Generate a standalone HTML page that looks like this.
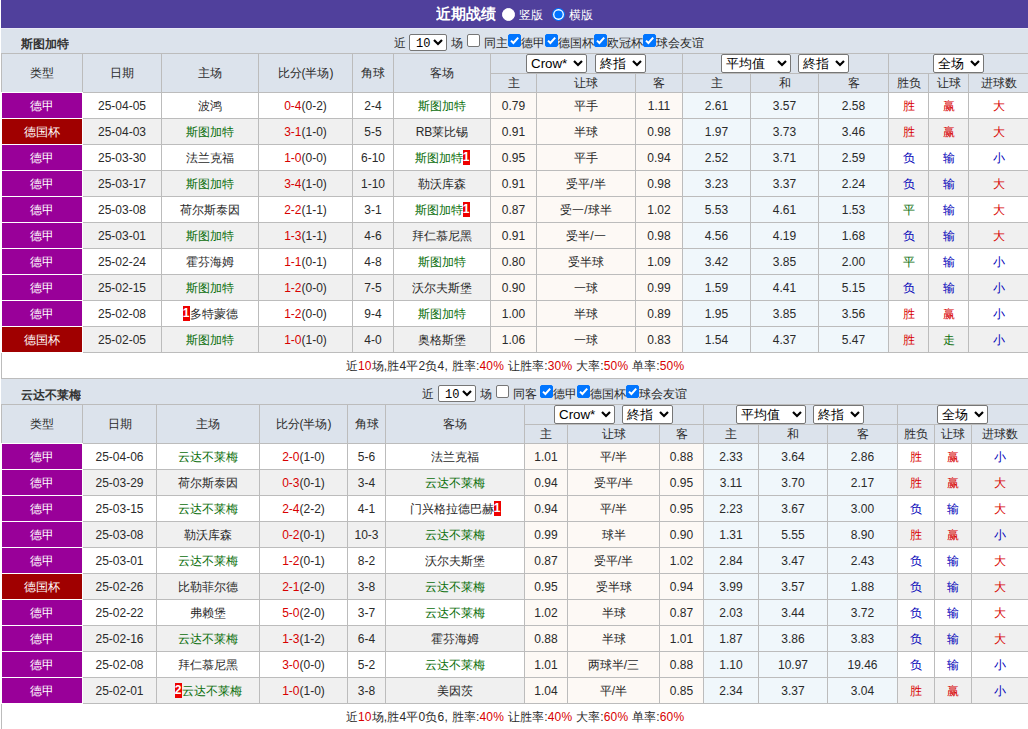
<!DOCTYPE html><html><head><meta charset="utf-8"><style>
html,body{margin:0;padding:0;background:#fff;}
body{width:1028px;height:729px;overflow:hidden;position:relative;font-family:"Liberation Sans",sans-serif;font-size:12px;color:#2a2a2a;}
body>div{position:absolute;white-space:nowrap;overflow:hidden;}
.ttl{font-weight:bold;color:#333;}
.tx{line-height:14px;}
.dg{padding-top:1px;box-sizing:border-box;}
.bd{display:inline-block;background:#e00;color:#fff;font-weight:bold;line-height:15px;height:15px;width:7px;text-align:center;vertical-align:1px;}
.sel{height:16px;border:1px solid #767676;border-radius:2px;background:#fff;box-sizing:border-box;color:#000;}
.sel span{position:absolute;left:4px;top:0;font-size:13.33px;}
.sel .chev{position:absolute;right:3px;}
.cb{width:13px;height:13px;box-sizing:border-box;border:1px solid #767676;border-radius:2px;background:#fff;}
.cb.on{background:#0075ff;border-color:#0075ff;}
.cb svg{position:absolute;left:-1px;top:-1px;}
.rd{width:13px;height:13px;box-sizing:border-box;border:1px solid #767676;border-radius:50%;background:#fff;}
.rd.on{border:2px solid #0075ff;}
.rd.on b{position:absolute;left:2px;top:2px;width:5px;height:5px;border-radius:50%;background:#0075ff;}
</style></head><body>
<div style="left:1px;top:0;width:1100px;height:28px;background:#50409c"></div>
<div style="left:1px;top:28px;width:1100px;height:1px;background:#e9e9f6"></div>
<div class="tx" style="left:436px;top:4px;font-size:15px;font-weight:bold;color:#fff;line-height:20px">近期战绩</div>
<div class="rd" style="left:502px;top:8px;background:#fff;border-color:#fff"></div>
<div class="tx" style="left:519px;top:7px;color:#fff;line-height:16px">竖版</div>
<div style="left:552px;top:8px;width:13px;height:13px"><svg width="13" height="13" viewBox="0 0 13 13"><circle cx="6.5" cy="6.5" r="6.5" fill="#0075ff"/><circle cx="6.5" cy="6.5" r="5.4" fill="#fff"/><circle cx="6.5" cy="6.5" r="4.1" fill="#0075ff"/></svg></div>
<div class="tx" style="left:569px;top:7px;color:#fff;line-height:16px">横版</div>
<div style="left:1px;top:29px;width:1100px;height:24px;background:#dce3ec"></div>
<div class="ttl" style="left:21px;top:37px;height:14px;line-height:14px">斯图加特</div>
<div style="left:1px;top:53px;width:1100px;height:39px;background:#dce3ec"></div>
<div style="left:2px;top:54px;width:80px;height:38px;line-height:38px;text-align:center;">类型</div>
<div style="left:83px;top:54px;width:78px;height:38px;line-height:38px;text-align:center;">日期</div>
<div style="left:162px;top:54px;width:96px;height:38px;line-height:38px;text-align:center;">主场</div>
<div style="left:259px;top:54px;width:93px;height:38px;line-height:38px;text-align:center;">比分(半场)</div>
<div style="left:353px;top:54px;width:40px;height:38px;line-height:38px;text-align:center;">角球</div>
<div style="left:394px;top:54px;width:96px;height:38px;line-height:38px;text-align:center;">客场</div>
<div style="left:491px;top:74px;width:45px;height:18px;line-height:18px;text-align:center;">主</div>
<div style="left:537px;top:74px;width:98px;height:18px;line-height:18px;text-align:center;">让球</div>
<div style="left:636px;top:74px;width:46px;height:18px;line-height:18px;text-align:center;">客</div>
<div style="left:683px;top:74px;width:67px;height:18px;line-height:18px;text-align:center;">主</div>
<div style="left:751px;top:74px;width:67px;height:18px;line-height:18px;text-align:center;">和</div>
<div style="left:819px;top:74px;width:69px;height:18px;line-height:18px;text-align:center;">客</div>
<div style="left:889px;top:74px;width:39px;height:18px;line-height:18px;text-align:center;">胜负</div>
<div style="left:929px;top:74px;width:39px;height:18px;line-height:18px;text-align:center;">让球</div>
<div style="left:969px;top:74px;width:59px;height:18px;line-height:18px;text-align:center;">进球数</div>
<div style="left:2px;top:93px;width:80px;height:25px;line-height:25px;text-align:center;padding-top:1px;box-sizing:border-box;background:#990099;color:#fff;">德甲</div>
<div style="left:83px;top:93px;width:78px;height:25px;line-height:25px;text-align:center;padding-top:1px;box-sizing:border-box;background:#ffffff;">25-04-05</div>
<div style="left:162px;top:93px;width:96px;height:25px;line-height:25px;text-align:center;padding-top:1px;box-sizing:border-box;background:#ffffff;">波鸿</div>
<div style="left:259px;top:93px;width:93px;height:25px;line-height:25px;text-align:center;padding-top:1px;box-sizing:border-box;background:#ffffff;"><span style="color:#d80000">0-4</span>(0-2)</div>
<div style="left:353px;top:93px;width:40px;height:25px;line-height:25px;text-align:center;padding-top:1px;box-sizing:border-box;background:#ffffff;">2-4</div>
<div style="left:394px;top:93px;width:96px;height:25px;line-height:25px;text-align:center;padding-top:1px;box-sizing:border-box;background:#ffffff;"><span style="color:#0a6e0a">斯图加特</span></div>
<div style="left:491px;top:93px;width:45px;height:25px;line-height:25px;text-align:center;padding-top:1px;box-sizing:border-box;background:#fdf9f5;">0.79</div>
<div style="left:537px;top:93px;width:98px;height:25px;line-height:25px;text-align:center;padding-top:1px;box-sizing:border-box;background:#fdf9f5;">平手</div>
<div style="left:636px;top:93px;width:46px;height:25px;line-height:25px;text-align:center;padding-top:1px;box-sizing:border-box;background:#fdf9f5;">1.11</div>
<div style="left:683px;top:93px;width:67px;height:25px;line-height:25px;text-align:center;padding-top:1px;box-sizing:border-box;background:#f0f7fb;">2.61</div>
<div style="left:751px;top:93px;width:67px;height:25px;line-height:25px;text-align:center;padding-top:1px;box-sizing:border-box;background:#f0f7fb;">3.57</div>
<div style="left:819px;top:93px;width:69px;height:25px;line-height:25px;text-align:center;padding-top:1px;box-sizing:border-box;background:#f0f7fb;">2.58</div>
<div style="left:889px;top:93px;width:39px;height:25px;line-height:25px;text-align:center;padding-top:1px;box-sizing:border-box;background:#ffffff;color:#d80000;">胜</div>
<div style="left:929px;top:93px;width:39px;height:25px;line-height:25px;text-align:center;padding-top:1px;box-sizing:border-box;background:#ffffff;color:#d80000;">赢</div>
<div style="left:969px;top:93px;width:59px;height:25px;line-height:25px;text-align:center;padding-top:1px;box-sizing:border-box;background:#ffffff;color:#d80000;">大</div>
<div style="left:2px;top:119px;width:80px;height:25px;line-height:25px;text-align:center;padding-top:1px;box-sizing:border-box;background:#a00000;color:#fff;">德国杯</div>
<div style="left:83px;top:119px;width:78px;height:25px;line-height:25px;text-align:center;padding-top:1px;box-sizing:border-box;background:#f0f0f0;">25-04-03</div>
<div style="left:162px;top:119px;width:96px;height:25px;line-height:25px;text-align:center;padding-top:1px;box-sizing:border-box;background:#f0f0f0;"><span style="color:#0a6e0a">斯图加特</span></div>
<div style="left:259px;top:119px;width:93px;height:25px;line-height:25px;text-align:center;padding-top:1px;box-sizing:border-box;background:#f0f0f0;"><span style="color:#d80000">3-1</span>(1-0)</div>
<div style="left:353px;top:119px;width:40px;height:25px;line-height:25px;text-align:center;padding-top:1px;box-sizing:border-box;background:#f0f0f0;">5-5</div>
<div style="left:394px;top:119px;width:96px;height:25px;line-height:25px;text-align:center;padding-top:1px;box-sizing:border-box;background:#f0f0f0;">RB莱比锡</div>
<div style="left:491px;top:119px;width:45px;height:25px;line-height:25px;text-align:center;padding-top:1px;box-sizing:border-box;background:#fdf9f5;">0.91</div>
<div style="left:537px;top:119px;width:98px;height:25px;line-height:25px;text-align:center;padding-top:1px;box-sizing:border-box;background:#fdf9f5;">半球</div>
<div style="left:636px;top:119px;width:46px;height:25px;line-height:25px;text-align:center;padding-top:1px;box-sizing:border-box;background:#fdf9f5;">0.98</div>
<div style="left:683px;top:119px;width:67px;height:25px;line-height:25px;text-align:center;padding-top:1px;box-sizing:border-box;background:#f0f7fb;">1.97</div>
<div style="left:751px;top:119px;width:67px;height:25px;line-height:25px;text-align:center;padding-top:1px;box-sizing:border-box;background:#f0f7fb;">3.73</div>
<div style="left:819px;top:119px;width:69px;height:25px;line-height:25px;text-align:center;padding-top:1px;box-sizing:border-box;background:#f0f7fb;">3.46</div>
<div style="left:889px;top:119px;width:39px;height:25px;line-height:25px;text-align:center;padding-top:1px;box-sizing:border-box;background:#f0f0f0;color:#d80000;">胜</div>
<div style="left:929px;top:119px;width:39px;height:25px;line-height:25px;text-align:center;padding-top:1px;box-sizing:border-box;background:#f0f0f0;color:#d80000;">赢</div>
<div style="left:969px;top:119px;width:59px;height:25px;line-height:25px;text-align:center;padding-top:1px;box-sizing:border-box;background:#f0f0f0;color:#d80000;">大</div>
<div style="left:2px;top:145px;width:80px;height:25px;line-height:25px;text-align:center;padding-top:1px;box-sizing:border-box;background:#990099;color:#fff;">德甲</div>
<div style="left:83px;top:145px;width:78px;height:25px;line-height:25px;text-align:center;padding-top:1px;box-sizing:border-box;background:#ffffff;">25-03-30</div>
<div style="left:162px;top:145px;width:96px;height:25px;line-height:25px;text-align:center;padding-top:1px;box-sizing:border-box;background:#ffffff;">法兰克福</div>
<div style="left:259px;top:145px;width:93px;height:25px;line-height:25px;text-align:center;padding-top:1px;box-sizing:border-box;background:#ffffff;"><span style="color:#d80000">1-0</span>(0-0)</div>
<div style="left:353px;top:145px;width:40px;height:25px;line-height:25px;text-align:center;padding-top:1px;box-sizing:border-box;background:#ffffff;">6-10</div>
<div style="left:394px;top:145px;width:96px;height:25px;line-height:25px;text-align:center;padding-top:1px;box-sizing:border-box;background:#ffffff;"><span style="color:#0a6e0a">斯图加特</span><span class="bd">1</span></div>
<div style="left:491px;top:145px;width:45px;height:25px;line-height:25px;text-align:center;padding-top:1px;box-sizing:border-box;background:#fdf9f5;">0.95</div>
<div style="left:537px;top:145px;width:98px;height:25px;line-height:25px;text-align:center;padding-top:1px;box-sizing:border-box;background:#fdf9f5;">平手</div>
<div style="left:636px;top:145px;width:46px;height:25px;line-height:25px;text-align:center;padding-top:1px;box-sizing:border-box;background:#fdf9f5;">0.94</div>
<div style="left:683px;top:145px;width:67px;height:25px;line-height:25px;text-align:center;padding-top:1px;box-sizing:border-box;background:#f0f7fb;">2.52</div>
<div style="left:751px;top:145px;width:67px;height:25px;line-height:25px;text-align:center;padding-top:1px;box-sizing:border-box;background:#f0f7fb;">3.71</div>
<div style="left:819px;top:145px;width:69px;height:25px;line-height:25px;text-align:center;padding-top:1px;box-sizing:border-box;background:#f0f7fb;">2.59</div>
<div style="left:889px;top:145px;width:39px;height:25px;line-height:25px;text-align:center;padding-top:1px;box-sizing:border-box;background:#ffffff;color:#0000b8;">负</div>
<div style="left:929px;top:145px;width:39px;height:25px;line-height:25px;text-align:center;padding-top:1px;box-sizing:border-box;background:#ffffff;color:#0000b8;">输</div>
<div style="left:969px;top:145px;width:59px;height:25px;line-height:25px;text-align:center;padding-top:1px;box-sizing:border-box;background:#ffffff;color:#0000b8;">小</div>
<div style="left:2px;top:171px;width:80px;height:25px;line-height:25px;text-align:center;padding-top:1px;box-sizing:border-box;background:#990099;color:#fff;">德甲</div>
<div style="left:83px;top:171px;width:78px;height:25px;line-height:25px;text-align:center;padding-top:1px;box-sizing:border-box;background:#f0f0f0;">25-03-17</div>
<div style="left:162px;top:171px;width:96px;height:25px;line-height:25px;text-align:center;padding-top:1px;box-sizing:border-box;background:#f0f0f0;"><span style="color:#0a6e0a">斯图加特</span></div>
<div style="left:259px;top:171px;width:93px;height:25px;line-height:25px;text-align:center;padding-top:1px;box-sizing:border-box;background:#f0f0f0;"><span style="color:#d80000">3-4</span>(1-0)</div>
<div style="left:353px;top:171px;width:40px;height:25px;line-height:25px;text-align:center;padding-top:1px;box-sizing:border-box;background:#f0f0f0;">1-10</div>
<div style="left:394px;top:171px;width:96px;height:25px;line-height:25px;text-align:center;padding-top:1px;box-sizing:border-box;background:#f0f0f0;">勒沃库森</div>
<div style="left:491px;top:171px;width:45px;height:25px;line-height:25px;text-align:center;padding-top:1px;box-sizing:border-box;background:#fdf9f5;">0.91</div>
<div style="left:537px;top:171px;width:98px;height:25px;line-height:25px;text-align:center;padding-top:1px;box-sizing:border-box;background:#fdf9f5;">受平/半</div>
<div style="left:636px;top:171px;width:46px;height:25px;line-height:25px;text-align:center;padding-top:1px;box-sizing:border-box;background:#fdf9f5;">0.98</div>
<div style="left:683px;top:171px;width:67px;height:25px;line-height:25px;text-align:center;padding-top:1px;box-sizing:border-box;background:#f0f7fb;">3.23</div>
<div style="left:751px;top:171px;width:67px;height:25px;line-height:25px;text-align:center;padding-top:1px;box-sizing:border-box;background:#f0f7fb;">3.37</div>
<div style="left:819px;top:171px;width:69px;height:25px;line-height:25px;text-align:center;padding-top:1px;box-sizing:border-box;background:#f0f7fb;">2.24</div>
<div style="left:889px;top:171px;width:39px;height:25px;line-height:25px;text-align:center;padding-top:1px;box-sizing:border-box;background:#f0f0f0;color:#0000b8;">负</div>
<div style="left:929px;top:171px;width:39px;height:25px;line-height:25px;text-align:center;padding-top:1px;box-sizing:border-box;background:#f0f0f0;color:#0000b8;">输</div>
<div style="left:969px;top:171px;width:59px;height:25px;line-height:25px;text-align:center;padding-top:1px;box-sizing:border-box;background:#f0f0f0;color:#d80000;">大</div>
<div style="left:2px;top:197px;width:80px;height:25px;line-height:25px;text-align:center;padding-top:1px;box-sizing:border-box;background:#990099;color:#fff;">德甲</div>
<div style="left:83px;top:197px;width:78px;height:25px;line-height:25px;text-align:center;padding-top:1px;box-sizing:border-box;background:#ffffff;">25-03-08</div>
<div style="left:162px;top:197px;width:96px;height:25px;line-height:25px;text-align:center;padding-top:1px;box-sizing:border-box;background:#ffffff;">荷尔斯泰因</div>
<div style="left:259px;top:197px;width:93px;height:25px;line-height:25px;text-align:center;padding-top:1px;box-sizing:border-box;background:#ffffff;"><span style="color:#d80000">2-2</span>(1-1)</div>
<div style="left:353px;top:197px;width:40px;height:25px;line-height:25px;text-align:center;padding-top:1px;box-sizing:border-box;background:#ffffff;">3-1</div>
<div style="left:394px;top:197px;width:96px;height:25px;line-height:25px;text-align:center;padding-top:1px;box-sizing:border-box;background:#ffffff;"><span style="color:#0a6e0a">斯图加特</span><span class="bd">1</span></div>
<div style="left:491px;top:197px;width:45px;height:25px;line-height:25px;text-align:center;padding-top:1px;box-sizing:border-box;background:#fdf9f5;">0.87</div>
<div style="left:537px;top:197px;width:98px;height:25px;line-height:25px;text-align:center;padding-top:1px;box-sizing:border-box;background:#fdf9f5;">受一/球半</div>
<div style="left:636px;top:197px;width:46px;height:25px;line-height:25px;text-align:center;padding-top:1px;box-sizing:border-box;background:#fdf9f5;">1.02</div>
<div style="left:683px;top:197px;width:67px;height:25px;line-height:25px;text-align:center;padding-top:1px;box-sizing:border-box;background:#f0f7fb;">5.53</div>
<div style="left:751px;top:197px;width:67px;height:25px;line-height:25px;text-align:center;padding-top:1px;box-sizing:border-box;background:#f0f7fb;">4.61</div>
<div style="left:819px;top:197px;width:69px;height:25px;line-height:25px;text-align:center;padding-top:1px;box-sizing:border-box;background:#f0f7fb;">1.53</div>
<div style="left:889px;top:197px;width:39px;height:25px;line-height:25px;text-align:center;padding-top:1px;box-sizing:border-box;background:#ffffff;color:#0a6e0a;">平</div>
<div style="left:929px;top:197px;width:39px;height:25px;line-height:25px;text-align:center;padding-top:1px;box-sizing:border-box;background:#ffffff;color:#0000b8;">输</div>
<div style="left:969px;top:197px;width:59px;height:25px;line-height:25px;text-align:center;padding-top:1px;box-sizing:border-box;background:#ffffff;color:#d80000;">大</div>
<div style="left:2px;top:223px;width:80px;height:25px;line-height:25px;text-align:center;padding-top:1px;box-sizing:border-box;background:#990099;color:#fff;">德甲</div>
<div style="left:83px;top:223px;width:78px;height:25px;line-height:25px;text-align:center;padding-top:1px;box-sizing:border-box;background:#f0f0f0;">25-03-01</div>
<div style="left:162px;top:223px;width:96px;height:25px;line-height:25px;text-align:center;padding-top:1px;box-sizing:border-box;background:#f0f0f0;"><span style="color:#0a6e0a">斯图加特</span></div>
<div style="left:259px;top:223px;width:93px;height:25px;line-height:25px;text-align:center;padding-top:1px;box-sizing:border-box;background:#f0f0f0;"><span style="color:#d80000">1-3</span>(1-1)</div>
<div style="left:353px;top:223px;width:40px;height:25px;line-height:25px;text-align:center;padding-top:1px;box-sizing:border-box;background:#f0f0f0;">4-6</div>
<div style="left:394px;top:223px;width:96px;height:25px;line-height:25px;text-align:center;padding-top:1px;box-sizing:border-box;background:#f0f0f0;">拜仁慕尼黑</div>
<div style="left:491px;top:223px;width:45px;height:25px;line-height:25px;text-align:center;padding-top:1px;box-sizing:border-box;background:#fdf9f5;">0.91</div>
<div style="left:537px;top:223px;width:98px;height:25px;line-height:25px;text-align:center;padding-top:1px;box-sizing:border-box;background:#fdf9f5;">受半/一</div>
<div style="left:636px;top:223px;width:46px;height:25px;line-height:25px;text-align:center;padding-top:1px;box-sizing:border-box;background:#fdf9f5;">0.98</div>
<div style="left:683px;top:223px;width:67px;height:25px;line-height:25px;text-align:center;padding-top:1px;box-sizing:border-box;background:#f0f7fb;">4.56</div>
<div style="left:751px;top:223px;width:67px;height:25px;line-height:25px;text-align:center;padding-top:1px;box-sizing:border-box;background:#f0f7fb;">4.19</div>
<div style="left:819px;top:223px;width:69px;height:25px;line-height:25px;text-align:center;padding-top:1px;box-sizing:border-box;background:#f0f7fb;">1.68</div>
<div style="left:889px;top:223px;width:39px;height:25px;line-height:25px;text-align:center;padding-top:1px;box-sizing:border-box;background:#f0f0f0;color:#0000b8;">负</div>
<div style="left:929px;top:223px;width:39px;height:25px;line-height:25px;text-align:center;padding-top:1px;box-sizing:border-box;background:#f0f0f0;color:#0000b8;">输</div>
<div style="left:969px;top:223px;width:59px;height:25px;line-height:25px;text-align:center;padding-top:1px;box-sizing:border-box;background:#f0f0f0;color:#d80000;">大</div>
<div style="left:2px;top:249px;width:80px;height:25px;line-height:25px;text-align:center;padding-top:1px;box-sizing:border-box;background:#990099;color:#fff;">德甲</div>
<div style="left:83px;top:249px;width:78px;height:25px;line-height:25px;text-align:center;padding-top:1px;box-sizing:border-box;background:#ffffff;">25-02-24</div>
<div style="left:162px;top:249px;width:96px;height:25px;line-height:25px;text-align:center;padding-top:1px;box-sizing:border-box;background:#ffffff;">霍芬海姆</div>
<div style="left:259px;top:249px;width:93px;height:25px;line-height:25px;text-align:center;padding-top:1px;box-sizing:border-box;background:#ffffff;"><span style="color:#d80000">1-1</span>(0-1)</div>
<div style="left:353px;top:249px;width:40px;height:25px;line-height:25px;text-align:center;padding-top:1px;box-sizing:border-box;background:#ffffff;">4-8</div>
<div style="left:394px;top:249px;width:96px;height:25px;line-height:25px;text-align:center;padding-top:1px;box-sizing:border-box;background:#ffffff;"><span style="color:#0a6e0a">斯图加特</span></div>
<div style="left:491px;top:249px;width:45px;height:25px;line-height:25px;text-align:center;padding-top:1px;box-sizing:border-box;background:#fdf9f5;">0.80</div>
<div style="left:537px;top:249px;width:98px;height:25px;line-height:25px;text-align:center;padding-top:1px;box-sizing:border-box;background:#fdf9f5;">受半球</div>
<div style="left:636px;top:249px;width:46px;height:25px;line-height:25px;text-align:center;padding-top:1px;box-sizing:border-box;background:#fdf9f5;">1.09</div>
<div style="left:683px;top:249px;width:67px;height:25px;line-height:25px;text-align:center;padding-top:1px;box-sizing:border-box;background:#f0f7fb;">3.42</div>
<div style="left:751px;top:249px;width:67px;height:25px;line-height:25px;text-align:center;padding-top:1px;box-sizing:border-box;background:#f0f7fb;">3.85</div>
<div style="left:819px;top:249px;width:69px;height:25px;line-height:25px;text-align:center;padding-top:1px;box-sizing:border-box;background:#f0f7fb;">2.00</div>
<div style="left:889px;top:249px;width:39px;height:25px;line-height:25px;text-align:center;padding-top:1px;box-sizing:border-box;background:#ffffff;color:#0a6e0a;">平</div>
<div style="left:929px;top:249px;width:39px;height:25px;line-height:25px;text-align:center;padding-top:1px;box-sizing:border-box;background:#ffffff;color:#0000b8;">输</div>
<div style="left:969px;top:249px;width:59px;height:25px;line-height:25px;text-align:center;padding-top:1px;box-sizing:border-box;background:#ffffff;color:#0000b8;">小</div>
<div style="left:2px;top:275px;width:80px;height:25px;line-height:25px;text-align:center;padding-top:1px;box-sizing:border-box;background:#990099;color:#fff;">德甲</div>
<div style="left:83px;top:275px;width:78px;height:25px;line-height:25px;text-align:center;padding-top:1px;box-sizing:border-box;background:#f0f0f0;">25-02-15</div>
<div style="left:162px;top:275px;width:96px;height:25px;line-height:25px;text-align:center;padding-top:1px;box-sizing:border-box;background:#f0f0f0;"><span style="color:#0a6e0a">斯图加特</span></div>
<div style="left:259px;top:275px;width:93px;height:25px;line-height:25px;text-align:center;padding-top:1px;box-sizing:border-box;background:#f0f0f0;"><span style="color:#d80000">1-2</span>(0-0)</div>
<div style="left:353px;top:275px;width:40px;height:25px;line-height:25px;text-align:center;padding-top:1px;box-sizing:border-box;background:#f0f0f0;">7-5</div>
<div style="left:394px;top:275px;width:96px;height:25px;line-height:25px;text-align:center;padding-top:1px;box-sizing:border-box;background:#f0f0f0;">沃尔夫斯堡</div>
<div style="left:491px;top:275px;width:45px;height:25px;line-height:25px;text-align:center;padding-top:1px;box-sizing:border-box;background:#fdf9f5;">0.90</div>
<div style="left:537px;top:275px;width:98px;height:25px;line-height:25px;text-align:center;padding-top:1px;box-sizing:border-box;background:#fdf9f5;">一球</div>
<div style="left:636px;top:275px;width:46px;height:25px;line-height:25px;text-align:center;padding-top:1px;box-sizing:border-box;background:#fdf9f5;">0.99</div>
<div style="left:683px;top:275px;width:67px;height:25px;line-height:25px;text-align:center;padding-top:1px;box-sizing:border-box;background:#f0f7fb;">1.59</div>
<div style="left:751px;top:275px;width:67px;height:25px;line-height:25px;text-align:center;padding-top:1px;box-sizing:border-box;background:#f0f7fb;">4.41</div>
<div style="left:819px;top:275px;width:69px;height:25px;line-height:25px;text-align:center;padding-top:1px;box-sizing:border-box;background:#f0f7fb;">5.15</div>
<div style="left:889px;top:275px;width:39px;height:25px;line-height:25px;text-align:center;padding-top:1px;box-sizing:border-box;background:#f0f0f0;color:#0000b8;">负</div>
<div style="left:929px;top:275px;width:39px;height:25px;line-height:25px;text-align:center;padding-top:1px;box-sizing:border-box;background:#f0f0f0;color:#0000b8;">输</div>
<div style="left:969px;top:275px;width:59px;height:25px;line-height:25px;text-align:center;padding-top:1px;box-sizing:border-box;background:#f0f0f0;color:#0000b8;">小</div>
<div style="left:2px;top:301px;width:80px;height:25px;line-height:25px;text-align:center;padding-top:1px;box-sizing:border-box;background:#990099;color:#fff;">德甲</div>
<div style="left:83px;top:301px;width:78px;height:25px;line-height:25px;text-align:center;padding-top:1px;box-sizing:border-box;background:#ffffff;">25-02-08</div>
<div style="left:162px;top:301px;width:96px;height:25px;line-height:25px;text-align:center;padding-top:1px;box-sizing:border-box;background:#ffffff;"><span class="bd">1</span>多特蒙德</div>
<div style="left:259px;top:301px;width:93px;height:25px;line-height:25px;text-align:center;padding-top:1px;box-sizing:border-box;background:#ffffff;"><span style="color:#d80000">1-2</span>(0-0)</div>
<div style="left:353px;top:301px;width:40px;height:25px;line-height:25px;text-align:center;padding-top:1px;box-sizing:border-box;background:#ffffff;">9-4</div>
<div style="left:394px;top:301px;width:96px;height:25px;line-height:25px;text-align:center;padding-top:1px;box-sizing:border-box;background:#ffffff;"><span style="color:#0a6e0a">斯图加特</span></div>
<div style="left:491px;top:301px;width:45px;height:25px;line-height:25px;text-align:center;padding-top:1px;box-sizing:border-box;background:#fdf9f5;">1.00</div>
<div style="left:537px;top:301px;width:98px;height:25px;line-height:25px;text-align:center;padding-top:1px;box-sizing:border-box;background:#fdf9f5;">半球</div>
<div style="left:636px;top:301px;width:46px;height:25px;line-height:25px;text-align:center;padding-top:1px;box-sizing:border-box;background:#fdf9f5;">0.89</div>
<div style="left:683px;top:301px;width:67px;height:25px;line-height:25px;text-align:center;padding-top:1px;box-sizing:border-box;background:#f0f7fb;">1.95</div>
<div style="left:751px;top:301px;width:67px;height:25px;line-height:25px;text-align:center;padding-top:1px;box-sizing:border-box;background:#f0f7fb;">3.85</div>
<div style="left:819px;top:301px;width:69px;height:25px;line-height:25px;text-align:center;padding-top:1px;box-sizing:border-box;background:#f0f7fb;">3.56</div>
<div style="left:889px;top:301px;width:39px;height:25px;line-height:25px;text-align:center;padding-top:1px;box-sizing:border-box;background:#ffffff;color:#d80000;">胜</div>
<div style="left:929px;top:301px;width:39px;height:25px;line-height:25px;text-align:center;padding-top:1px;box-sizing:border-box;background:#ffffff;color:#d80000;">赢</div>
<div style="left:969px;top:301px;width:59px;height:25px;line-height:25px;text-align:center;padding-top:1px;box-sizing:border-box;background:#ffffff;color:#0000b8;">小</div>
<div style="left:2px;top:327px;width:80px;height:25px;line-height:25px;text-align:center;padding-top:1px;box-sizing:border-box;background:#a00000;color:#fff;">德国杯</div>
<div style="left:83px;top:327px;width:78px;height:25px;line-height:25px;text-align:center;padding-top:1px;box-sizing:border-box;background:#f0f0f0;">25-02-05</div>
<div style="left:162px;top:327px;width:96px;height:25px;line-height:25px;text-align:center;padding-top:1px;box-sizing:border-box;background:#f0f0f0;"><span style="color:#0a6e0a">斯图加特</span></div>
<div style="left:259px;top:327px;width:93px;height:25px;line-height:25px;text-align:center;padding-top:1px;box-sizing:border-box;background:#f0f0f0;"><span style="color:#d80000">1-0</span>(1-0)</div>
<div style="left:353px;top:327px;width:40px;height:25px;line-height:25px;text-align:center;padding-top:1px;box-sizing:border-box;background:#f0f0f0;">4-0</div>
<div style="left:394px;top:327px;width:96px;height:25px;line-height:25px;text-align:center;padding-top:1px;box-sizing:border-box;background:#f0f0f0;">奥格斯堡</div>
<div style="left:491px;top:327px;width:45px;height:25px;line-height:25px;text-align:center;padding-top:1px;box-sizing:border-box;background:#fdf9f5;">1.06</div>
<div style="left:537px;top:327px;width:98px;height:25px;line-height:25px;text-align:center;padding-top:1px;box-sizing:border-box;background:#fdf9f5;">一球</div>
<div style="left:636px;top:327px;width:46px;height:25px;line-height:25px;text-align:center;padding-top:1px;box-sizing:border-box;background:#fdf9f5;">0.83</div>
<div style="left:683px;top:327px;width:67px;height:25px;line-height:25px;text-align:center;padding-top:1px;box-sizing:border-box;background:#f0f7fb;">1.54</div>
<div style="left:751px;top:327px;width:67px;height:25px;line-height:25px;text-align:center;padding-top:1px;box-sizing:border-box;background:#f0f7fb;">4.37</div>
<div style="left:819px;top:327px;width:69px;height:25px;line-height:25px;text-align:center;padding-top:1px;box-sizing:border-box;background:#f0f7fb;">5.47</div>
<div style="left:889px;top:327px;width:39px;height:25px;line-height:25px;text-align:center;padding-top:1px;box-sizing:border-box;background:#f0f0f0;color:#d80000;">胜</div>
<div style="left:929px;top:327px;width:39px;height:25px;line-height:25px;text-align:center;padding-top:1px;box-sizing:border-box;background:#f0f0f0;color:#0a6e0a;">走</div>
<div style="left:969px;top:327px;width:59px;height:25px;line-height:25px;text-align:center;padding-top:1px;box-sizing:border-box;background:#f0f0f0;color:#0000b8;">小</div>
<div style="left:2px;top:353px;width:1026px;height:25px;line-height:25px;text-align:center;background:#fff;padding-top:1px;box-sizing:border-box;letter-spacing:0.19px;">近<span style="color:#d80000">10</span>场,胜4平2负4, 胜率:<span style="color:#d80000">40%</span> 让胜率:<span style="color:#d80000">30%</span> 大率:<span style="color:#d80000">50%</span> 单率:<span style="color:#d80000">50%</span></div>
<div style="left:1px;top:53px;width:1099px;height:1px;background:#bcbcbc"></div>
<div style="left:490px;top:73px;width:610px;height:1px;background:#bcbcbc"></div>
<div style="left:1px;top:92px;width:1099px;height:1px;background:#bcbcbc"></div>
<div style="left:1px;top:118px;width:1099px;height:1px;background:#bcbcbc"></div>
<div style="left:1px;top:144px;width:1099px;height:1px;background:#bcbcbc"></div>
<div style="left:1px;top:170px;width:1099px;height:1px;background:#bcbcbc"></div>
<div style="left:1px;top:196px;width:1099px;height:1px;background:#bcbcbc"></div>
<div style="left:1px;top:222px;width:1099px;height:1px;background:#bcbcbc"></div>
<div style="left:1px;top:248px;width:1099px;height:1px;background:#bcbcbc"></div>
<div style="left:1px;top:274px;width:1099px;height:1px;background:#bcbcbc"></div>
<div style="left:1px;top:300px;width:1099px;height:1px;background:#bcbcbc"></div>
<div style="left:1px;top:326px;width:1099px;height:1px;background:#bcbcbc"></div>
<div style="left:1px;top:352px;width:1099px;height:1px;background:#bcbcbc"></div>
<div style="left:1px;top:378px;width:1099px;height:1px;background:#bcbcbc"></div>
<div style="left:1px;top:53px;width:1px;height:299px;background:#bcbcbc"></div>
<div style="left:82px;top:53px;width:1px;height:299px;background:#bcbcbc"></div>
<div style="left:161px;top:53px;width:1px;height:299px;background:#bcbcbc"></div>
<div style="left:258px;top:53px;width:1px;height:299px;background:#bcbcbc"></div>
<div style="left:352px;top:53px;width:1px;height:299px;background:#bcbcbc"></div>
<div style="left:393px;top:53px;width:1px;height:299px;background:#bcbcbc"></div>
<div style="left:490px;top:53px;width:1px;height:299px;background:#bcbcbc"></div>
<div style="left:536px;top:73px;width:1px;height:279px;background:#bcbcbc"></div>
<div style="left:635px;top:73px;width:1px;height:279px;background:#bcbcbc"></div>
<div style="left:682px;top:53px;width:1px;height:299px;background:#bcbcbc"></div>
<div style="left:750px;top:73px;width:1px;height:279px;background:#bcbcbc"></div>
<div style="left:818px;top:73px;width:1px;height:279px;background:#bcbcbc"></div>
<div style="left:888px;top:53px;width:1px;height:299px;background:#bcbcbc"></div>
<div style="left:928px;top:73px;width:1px;height:279px;background:#bcbcbc"></div>
<div style="left:968px;top:73px;width:1px;height:279px;background:#bcbcbc"></div>
<div style="left:1px;top:352px;width:1px;height:26px;background:#bcbcbc"></div>
<div style="left:1px;top:92px;width:82px;height:1px;background:#ffffff"></div>
<div style="left:1px;top:118px;width:82px;height:1px;background:#ffffff"></div>
<div style="left:1px;top:144px;width:82px;height:1px;background:#ffffff"></div>
<div style="left:1px;top:170px;width:82px;height:1px;background:#ffffff"></div>
<div style="left:1px;top:196px;width:82px;height:1px;background:#ffffff"></div>
<div style="left:1px;top:222px;width:82px;height:1px;background:#ffffff"></div>
<div style="left:1px;top:248px;width:82px;height:1px;background:#ffffff"></div>
<div style="left:1px;top:274px;width:82px;height:1px;background:#ffffff"></div>
<div style="left:1px;top:300px;width:82px;height:1px;background:#ffffff"></div>
<div style="left:1px;top:326px;width:82px;height:1px;background:#ffffff"></div>
<div style="left:1px;top:352px;width:82px;height:1px;background:#ffffff"></div>
<div style="left:1px;top:92px;width:1px;height:261px;background:#ffffff"></div>
<div style="left:82px;top:92px;width:1px;height:261px;background:#ffffff"></div>
<div class="tx" style="left:394px;top:36px;">近</div><div class="sel" style="left:409px;top:34px;width:38px;height:17px;line-height:15px"><span style="font-family:'Liberation Mono',monospace;font-size:12px;left:6px;top:2px;">10</span><svg class="chev" width="10" height="7" viewBox="0 0 10 7" style="top:4px"><path d="M1 1 L5 5 L9 1" fill="none" stroke="#000" stroke-width="2.2"/></svg></div><div class="tx" style="left:451px;top:36px;">场</div><div class="cb" style="left:467px;top:34px"></div><div class="tx" style="left:484px;top:36px;">同主</div><div class="cb on" style="left:508px;top:34px"><svg width="13" height="13" viewBox="0 0 13 13"><path d="M3 6.6 L5.4 9 L10.2 3.6" fill="none" stroke="#fff" stroke-width="2"/></svg></div><div class="tx" style="left:521px;top:36px;">德甲</div><div class="cb on" style="left:545px;top:34px"><svg width="13" height="13" viewBox="0 0 13 13"><path d="M3 6.6 L5.4 9 L10.2 3.6" fill="none" stroke="#fff" stroke-width="2"/></svg></div><div class="tx" style="left:558px;top:36px;">德国杯</div><div class="cb on" style="left:594px;top:34px"><svg width="13" height="13" viewBox="0 0 13 13"><path d="M3 6.6 L5.4 9 L10.2 3.6" fill="none" stroke="#fff" stroke-width="2"/></svg></div><div class="tx" style="left:607px;top:36px;">欧冠杯</div><div class="cb on" style="left:643px;top:34px"><svg width="13" height="13" viewBox="0 0 13 13"><path d="M3 6.6 L5.4 9 L10.2 3.6" fill="none" stroke="#fff" stroke-width="2"/></svg></div><div class="tx" style="left:656px;top:36px;">球会友谊</div><div class="sel" style="left:526px;top:54px;width:61px;height:19px;line-height:17px"><span style="">Crow*</span><svg class="chev" width="10" height="7" viewBox="0 0 10 7" style="top:5px"><path d="M1 1 L5 5 L9 1" fill="none" stroke="#000" stroke-width="2.2"/></svg></div><div class="sel" style="left:595px;top:54px;width:51px;height:19px;line-height:17px"><span style="">終指</span><svg class="chev" width="10" height="7" viewBox="0 0 10 7" style="top:5px"><path d="M1 1 L5 5 L9 1" fill="none" stroke="#000" stroke-width="2.2"/></svg></div><div class="sel" style="left:721px;top:54px;width:70px;height:19px;line-height:17px"><span style="">平均值</span><svg class="chev" width="10" height="7" viewBox="0 0 10 7" style="top:5px"><path d="M1 1 L5 5 L9 1" fill="none" stroke="#000" stroke-width="2.2"/></svg></div><div class="sel" style="left:798px;top:54px;width:51px;height:19px;line-height:17px"><span style="">終指</span><svg class="chev" width="10" height="7" viewBox="0 0 10 7" style="top:5px"><path d="M1 1 L5 5 L9 1" fill="none" stroke="#000" stroke-width="2.2"/></svg></div><div class="sel" style="left:933px;top:54px;width:51px;height:19px;line-height:17px"><span style="">全场</span><svg class="chev" width="10" height="7" viewBox="0 0 10 7" style="top:5px"><path d="M1 1 L5 5 L9 1" fill="none" stroke="#000" stroke-width="2.2"/></svg></div>
<div style="left:1px;top:379px;width:1100px;height:25px;background:#dce3ec"></div>
<div class="ttl" style="left:21px;top:388px;height:14px;line-height:14px">云达不莱梅</div>
<div style="left:1px;top:404px;width:1100px;height:39px;background:#dce3ec"></div>
<div style="left:2px;top:405px;width:80px;height:38px;line-height:38px;text-align:center;">类型</div>
<div style="left:83px;top:405px;width:73px;height:38px;line-height:38px;text-align:center;">日期</div>
<div style="left:157px;top:405px;width:102px;height:38px;line-height:38px;text-align:center;">主场</div>
<div style="left:260px;top:405px;width:87px;height:38px;line-height:38px;text-align:center;">比分(半场)</div>
<div style="left:348px;top:405px;width:37px;height:38px;line-height:38px;text-align:center;">角球</div>
<div style="left:386px;top:405px;width:138px;height:38px;line-height:38px;text-align:center;">客场</div>
<div style="left:525px;top:425px;width:42px;height:18px;line-height:18px;text-align:center;">主</div>
<div style="left:568px;top:425px;width:91px;height:18px;line-height:18px;text-align:center;">让球</div>
<div style="left:660px;top:425px;width:43px;height:18px;line-height:18px;text-align:center;">客</div>
<div style="left:704px;top:425px;width:54px;height:18px;line-height:18px;text-align:center;">主</div>
<div style="left:759px;top:425px;width:68px;height:18px;line-height:18px;text-align:center;">和</div>
<div style="left:828px;top:425px;width:69px;height:18px;line-height:18px;text-align:center;">客</div>
<div style="left:898px;top:425px;width:36px;height:18px;line-height:18px;text-align:center;">胜负</div>
<div style="left:935px;top:425px;width:36px;height:18px;line-height:18px;text-align:center;">让球</div>
<div style="left:972px;top:425px;width:56px;height:18px;line-height:18px;text-align:center;">进球数</div>
<div style="left:2px;top:444px;width:80px;height:25px;line-height:25px;text-align:center;padding-top:1px;box-sizing:border-box;background:#990099;color:#fff;">德甲</div>
<div style="left:83px;top:444px;width:73px;height:25px;line-height:25px;text-align:center;padding-top:1px;box-sizing:border-box;background:#ffffff;">25-04-06</div>
<div style="left:157px;top:444px;width:102px;height:25px;line-height:25px;text-align:center;padding-top:1px;box-sizing:border-box;background:#ffffff;"><span style="color:#0a6e0a">云达不莱梅</span></div>
<div style="left:260px;top:444px;width:87px;height:25px;line-height:25px;text-align:center;padding-top:1px;box-sizing:border-box;background:#ffffff;"><span style="color:#d80000">2-0</span>(1-0)</div>
<div style="left:348px;top:444px;width:37px;height:25px;line-height:25px;text-align:center;padding-top:1px;box-sizing:border-box;background:#ffffff;">5-6</div>
<div style="left:386px;top:444px;width:138px;height:25px;line-height:25px;text-align:center;padding-top:1px;box-sizing:border-box;background:#ffffff;">法兰克福</div>
<div style="left:525px;top:444px;width:42px;height:25px;line-height:25px;text-align:center;padding-top:1px;box-sizing:border-box;background:#fdf9f5;">1.01</div>
<div style="left:568px;top:444px;width:91px;height:25px;line-height:25px;text-align:center;padding-top:1px;box-sizing:border-box;background:#fdf9f5;">平/半</div>
<div style="left:660px;top:444px;width:43px;height:25px;line-height:25px;text-align:center;padding-top:1px;box-sizing:border-box;background:#fdf9f5;">0.88</div>
<div style="left:704px;top:444px;width:54px;height:25px;line-height:25px;text-align:center;padding-top:1px;box-sizing:border-box;background:#f0f7fb;">2.33</div>
<div style="left:759px;top:444px;width:68px;height:25px;line-height:25px;text-align:center;padding-top:1px;box-sizing:border-box;background:#f0f7fb;">3.64</div>
<div style="left:828px;top:444px;width:69px;height:25px;line-height:25px;text-align:center;padding-top:1px;box-sizing:border-box;background:#f0f7fb;">2.86</div>
<div style="left:898px;top:444px;width:36px;height:25px;line-height:25px;text-align:center;padding-top:1px;box-sizing:border-box;background:#ffffff;color:#d80000;">胜</div>
<div style="left:935px;top:444px;width:36px;height:25px;line-height:25px;text-align:center;padding-top:1px;box-sizing:border-box;background:#ffffff;color:#d80000;">赢</div>
<div style="left:972px;top:444px;width:56px;height:25px;line-height:25px;text-align:center;padding-top:1px;box-sizing:border-box;background:#ffffff;color:#0000b8;">小</div>
<div style="left:2px;top:470px;width:80px;height:25px;line-height:25px;text-align:center;padding-top:1px;box-sizing:border-box;background:#990099;color:#fff;">德甲</div>
<div style="left:83px;top:470px;width:73px;height:25px;line-height:25px;text-align:center;padding-top:1px;box-sizing:border-box;background:#f0f0f0;">25-03-29</div>
<div style="left:157px;top:470px;width:102px;height:25px;line-height:25px;text-align:center;padding-top:1px;box-sizing:border-box;background:#f0f0f0;">荷尔斯泰因</div>
<div style="left:260px;top:470px;width:87px;height:25px;line-height:25px;text-align:center;padding-top:1px;box-sizing:border-box;background:#f0f0f0;"><span style="color:#d80000">0-3</span>(0-1)</div>
<div style="left:348px;top:470px;width:37px;height:25px;line-height:25px;text-align:center;padding-top:1px;box-sizing:border-box;background:#f0f0f0;">3-4</div>
<div style="left:386px;top:470px;width:138px;height:25px;line-height:25px;text-align:center;padding-top:1px;box-sizing:border-box;background:#f0f0f0;"><span style="color:#0a6e0a">云达不莱梅</span></div>
<div style="left:525px;top:470px;width:42px;height:25px;line-height:25px;text-align:center;padding-top:1px;box-sizing:border-box;background:#fdf9f5;">0.94</div>
<div style="left:568px;top:470px;width:91px;height:25px;line-height:25px;text-align:center;padding-top:1px;box-sizing:border-box;background:#fdf9f5;">受平/半</div>
<div style="left:660px;top:470px;width:43px;height:25px;line-height:25px;text-align:center;padding-top:1px;box-sizing:border-box;background:#fdf9f5;">0.95</div>
<div style="left:704px;top:470px;width:54px;height:25px;line-height:25px;text-align:center;padding-top:1px;box-sizing:border-box;background:#f0f7fb;">3.11</div>
<div style="left:759px;top:470px;width:68px;height:25px;line-height:25px;text-align:center;padding-top:1px;box-sizing:border-box;background:#f0f7fb;">3.70</div>
<div style="left:828px;top:470px;width:69px;height:25px;line-height:25px;text-align:center;padding-top:1px;box-sizing:border-box;background:#f0f7fb;">2.17</div>
<div style="left:898px;top:470px;width:36px;height:25px;line-height:25px;text-align:center;padding-top:1px;box-sizing:border-box;background:#f0f0f0;color:#d80000;">胜</div>
<div style="left:935px;top:470px;width:36px;height:25px;line-height:25px;text-align:center;padding-top:1px;box-sizing:border-box;background:#f0f0f0;color:#d80000;">赢</div>
<div style="left:972px;top:470px;width:56px;height:25px;line-height:25px;text-align:center;padding-top:1px;box-sizing:border-box;background:#f0f0f0;color:#d80000;">大</div>
<div style="left:2px;top:496px;width:80px;height:25px;line-height:25px;text-align:center;padding-top:1px;box-sizing:border-box;background:#990099;color:#fff;">德甲</div>
<div style="left:83px;top:496px;width:73px;height:25px;line-height:25px;text-align:center;padding-top:1px;box-sizing:border-box;background:#ffffff;">25-03-15</div>
<div style="left:157px;top:496px;width:102px;height:25px;line-height:25px;text-align:center;padding-top:1px;box-sizing:border-box;background:#ffffff;"><span style="color:#0a6e0a">云达不莱梅</span></div>
<div style="left:260px;top:496px;width:87px;height:25px;line-height:25px;text-align:center;padding-top:1px;box-sizing:border-box;background:#ffffff;"><span style="color:#d80000">2-4</span>(2-2)</div>
<div style="left:348px;top:496px;width:37px;height:25px;line-height:25px;text-align:center;padding-top:1px;box-sizing:border-box;background:#ffffff;">4-1</div>
<div style="left:386px;top:496px;width:138px;height:25px;line-height:25px;text-align:center;padding-top:1px;box-sizing:border-box;background:#ffffff;">门兴格拉德巴赫<span class="bd">1</span></div>
<div style="left:525px;top:496px;width:42px;height:25px;line-height:25px;text-align:center;padding-top:1px;box-sizing:border-box;background:#fdf9f5;">0.94</div>
<div style="left:568px;top:496px;width:91px;height:25px;line-height:25px;text-align:center;padding-top:1px;box-sizing:border-box;background:#fdf9f5;">平/半</div>
<div style="left:660px;top:496px;width:43px;height:25px;line-height:25px;text-align:center;padding-top:1px;box-sizing:border-box;background:#fdf9f5;">0.95</div>
<div style="left:704px;top:496px;width:54px;height:25px;line-height:25px;text-align:center;padding-top:1px;box-sizing:border-box;background:#f0f7fb;">2.23</div>
<div style="left:759px;top:496px;width:68px;height:25px;line-height:25px;text-align:center;padding-top:1px;box-sizing:border-box;background:#f0f7fb;">3.67</div>
<div style="left:828px;top:496px;width:69px;height:25px;line-height:25px;text-align:center;padding-top:1px;box-sizing:border-box;background:#f0f7fb;">3.00</div>
<div style="left:898px;top:496px;width:36px;height:25px;line-height:25px;text-align:center;padding-top:1px;box-sizing:border-box;background:#ffffff;color:#0000b8;">负</div>
<div style="left:935px;top:496px;width:36px;height:25px;line-height:25px;text-align:center;padding-top:1px;box-sizing:border-box;background:#ffffff;color:#0000b8;">输</div>
<div style="left:972px;top:496px;width:56px;height:25px;line-height:25px;text-align:center;padding-top:1px;box-sizing:border-box;background:#ffffff;color:#d80000;">大</div>
<div style="left:2px;top:522px;width:80px;height:25px;line-height:25px;text-align:center;padding-top:1px;box-sizing:border-box;background:#990099;color:#fff;">德甲</div>
<div style="left:83px;top:522px;width:73px;height:25px;line-height:25px;text-align:center;padding-top:1px;box-sizing:border-box;background:#f0f0f0;">25-03-08</div>
<div style="left:157px;top:522px;width:102px;height:25px;line-height:25px;text-align:center;padding-top:1px;box-sizing:border-box;background:#f0f0f0;">勒沃库森</div>
<div style="left:260px;top:522px;width:87px;height:25px;line-height:25px;text-align:center;padding-top:1px;box-sizing:border-box;background:#f0f0f0;"><span style="color:#d80000">0-2</span>(0-1)</div>
<div style="left:348px;top:522px;width:37px;height:25px;line-height:25px;text-align:center;padding-top:1px;box-sizing:border-box;background:#f0f0f0;">10-3</div>
<div style="left:386px;top:522px;width:138px;height:25px;line-height:25px;text-align:center;padding-top:1px;box-sizing:border-box;background:#f0f0f0;"><span style="color:#0a6e0a">云达不莱梅</span></div>
<div style="left:525px;top:522px;width:42px;height:25px;line-height:25px;text-align:center;padding-top:1px;box-sizing:border-box;background:#fdf9f5;">0.99</div>
<div style="left:568px;top:522px;width:91px;height:25px;line-height:25px;text-align:center;padding-top:1px;box-sizing:border-box;background:#fdf9f5;">球半</div>
<div style="left:660px;top:522px;width:43px;height:25px;line-height:25px;text-align:center;padding-top:1px;box-sizing:border-box;background:#fdf9f5;">0.90</div>
<div style="left:704px;top:522px;width:54px;height:25px;line-height:25px;text-align:center;padding-top:1px;box-sizing:border-box;background:#f0f7fb;">1.31</div>
<div style="left:759px;top:522px;width:68px;height:25px;line-height:25px;text-align:center;padding-top:1px;box-sizing:border-box;background:#f0f7fb;">5.55</div>
<div style="left:828px;top:522px;width:69px;height:25px;line-height:25px;text-align:center;padding-top:1px;box-sizing:border-box;background:#f0f7fb;">8.90</div>
<div style="left:898px;top:522px;width:36px;height:25px;line-height:25px;text-align:center;padding-top:1px;box-sizing:border-box;background:#f0f0f0;color:#d80000;">胜</div>
<div style="left:935px;top:522px;width:36px;height:25px;line-height:25px;text-align:center;padding-top:1px;box-sizing:border-box;background:#f0f0f0;color:#d80000;">赢</div>
<div style="left:972px;top:522px;width:56px;height:25px;line-height:25px;text-align:center;padding-top:1px;box-sizing:border-box;background:#f0f0f0;color:#0000b8;">小</div>
<div style="left:2px;top:548px;width:80px;height:25px;line-height:25px;text-align:center;padding-top:1px;box-sizing:border-box;background:#990099;color:#fff;">德甲</div>
<div style="left:83px;top:548px;width:73px;height:25px;line-height:25px;text-align:center;padding-top:1px;box-sizing:border-box;background:#ffffff;">25-03-01</div>
<div style="left:157px;top:548px;width:102px;height:25px;line-height:25px;text-align:center;padding-top:1px;box-sizing:border-box;background:#ffffff;"><span style="color:#0a6e0a">云达不莱梅</span></div>
<div style="left:260px;top:548px;width:87px;height:25px;line-height:25px;text-align:center;padding-top:1px;box-sizing:border-box;background:#ffffff;"><span style="color:#d80000">1-2</span>(0-1)</div>
<div style="left:348px;top:548px;width:37px;height:25px;line-height:25px;text-align:center;padding-top:1px;box-sizing:border-box;background:#ffffff;">8-2</div>
<div style="left:386px;top:548px;width:138px;height:25px;line-height:25px;text-align:center;padding-top:1px;box-sizing:border-box;background:#ffffff;">沃尔夫斯堡</div>
<div style="left:525px;top:548px;width:42px;height:25px;line-height:25px;text-align:center;padding-top:1px;box-sizing:border-box;background:#fdf9f5;">0.87</div>
<div style="left:568px;top:548px;width:91px;height:25px;line-height:25px;text-align:center;padding-top:1px;box-sizing:border-box;background:#fdf9f5;">受平/半</div>
<div style="left:660px;top:548px;width:43px;height:25px;line-height:25px;text-align:center;padding-top:1px;box-sizing:border-box;background:#fdf9f5;">1.02</div>
<div style="left:704px;top:548px;width:54px;height:25px;line-height:25px;text-align:center;padding-top:1px;box-sizing:border-box;background:#f0f7fb;">2.84</div>
<div style="left:759px;top:548px;width:68px;height:25px;line-height:25px;text-align:center;padding-top:1px;box-sizing:border-box;background:#f0f7fb;">3.47</div>
<div style="left:828px;top:548px;width:69px;height:25px;line-height:25px;text-align:center;padding-top:1px;box-sizing:border-box;background:#f0f7fb;">2.43</div>
<div style="left:898px;top:548px;width:36px;height:25px;line-height:25px;text-align:center;padding-top:1px;box-sizing:border-box;background:#ffffff;color:#0000b8;">负</div>
<div style="left:935px;top:548px;width:36px;height:25px;line-height:25px;text-align:center;padding-top:1px;box-sizing:border-box;background:#ffffff;color:#0000b8;">输</div>
<div style="left:972px;top:548px;width:56px;height:25px;line-height:25px;text-align:center;padding-top:1px;box-sizing:border-box;background:#ffffff;color:#d80000;">大</div>
<div style="left:2px;top:574px;width:80px;height:25px;line-height:25px;text-align:center;padding-top:1px;box-sizing:border-box;background:#a00000;color:#fff;">德国杯</div>
<div style="left:83px;top:574px;width:73px;height:25px;line-height:25px;text-align:center;padding-top:1px;box-sizing:border-box;background:#f0f0f0;">25-02-26</div>
<div style="left:157px;top:574px;width:102px;height:25px;line-height:25px;text-align:center;padding-top:1px;box-sizing:border-box;background:#f0f0f0;">比勒菲尔德</div>
<div style="left:260px;top:574px;width:87px;height:25px;line-height:25px;text-align:center;padding-top:1px;box-sizing:border-box;background:#f0f0f0;"><span style="color:#d80000">2-1</span>(2-0)</div>
<div style="left:348px;top:574px;width:37px;height:25px;line-height:25px;text-align:center;padding-top:1px;box-sizing:border-box;background:#f0f0f0;">3-8</div>
<div style="left:386px;top:574px;width:138px;height:25px;line-height:25px;text-align:center;padding-top:1px;box-sizing:border-box;background:#f0f0f0;"><span style="color:#0a6e0a">云达不莱梅</span></div>
<div style="left:525px;top:574px;width:42px;height:25px;line-height:25px;text-align:center;padding-top:1px;box-sizing:border-box;background:#fdf9f5;">0.95</div>
<div style="left:568px;top:574px;width:91px;height:25px;line-height:25px;text-align:center;padding-top:1px;box-sizing:border-box;background:#fdf9f5;">受半球</div>
<div style="left:660px;top:574px;width:43px;height:25px;line-height:25px;text-align:center;padding-top:1px;box-sizing:border-box;background:#fdf9f5;">0.94</div>
<div style="left:704px;top:574px;width:54px;height:25px;line-height:25px;text-align:center;padding-top:1px;box-sizing:border-box;background:#f0f7fb;">3.99</div>
<div style="left:759px;top:574px;width:68px;height:25px;line-height:25px;text-align:center;padding-top:1px;box-sizing:border-box;background:#f0f7fb;">3.57</div>
<div style="left:828px;top:574px;width:69px;height:25px;line-height:25px;text-align:center;padding-top:1px;box-sizing:border-box;background:#f0f7fb;">1.88</div>
<div style="left:898px;top:574px;width:36px;height:25px;line-height:25px;text-align:center;padding-top:1px;box-sizing:border-box;background:#f0f0f0;color:#0000b8;">负</div>
<div style="left:935px;top:574px;width:36px;height:25px;line-height:25px;text-align:center;padding-top:1px;box-sizing:border-box;background:#f0f0f0;color:#0000b8;">输</div>
<div style="left:972px;top:574px;width:56px;height:25px;line-height:25px;text-align:center;padding-top:1px;box-sizing:border-box;background:#f0f0f0;color:#d80000;">大</div>
<div style="left:2px;top:600px;width:80px;height:25px;line-height:25px;text-align:center;padding-top:1px;box-sizing:border-box;background:#990099;color:#fff;">德甲</div>
<div style="left:83px;top:600px;width:73px;height:25px;line-height:25px;text-align:center;padding-top:1px;box-sizing:border-box;background:#ffffff;">25-02-22</div>
<div style="left:157px;top:600px;width:102px;height:25px;line-height:25px;text-align:center;padding-top:1px;box-sizing:border-box;background:#ffffff;">弗赖堡</div>
<div style="left:260px;top:600px;width:87px;height:25px;line-height:25px;text-align:center;padding-top:1px;box-sizing:border-box;background:#ffffff;"><span style="color:#d80000">5-0</span>(2-0)</div>
<div style="left:348px;top:600px;width:37px;height:25px;line-height:25px;text-align:center;padding-top:1px;box-sizing:border-box;background:#ffffff;">3-7</div>
<div style="left:386px;top:600px;width:138px;height:25px;line-height:25px;text-align:center;padding-top:1px;box-sizing:border-box;background:#ffffff;"><span style="color:#0a6e0a">云达不莱梅</span></div>
<div style="left:525px;top:600px;width:42px;height:25px;line-height:25px;text-align:center;padding-top:1px;box-sizing:border-box;background:#fdf9f5;">1.02</div>
<div style="left:568px;top:600px;width:91px;height:25px;line-height:25px;text-align:center;padding-top:1px;box-sizing:border-box;background:#fdf9f5;">半球</div>
<div style="left:660px;top:600px;width:43px;height:25px;line-height:25px;text-align:center;padding-top:1px;box-sizing:border-box;background:#fdf9f5;">0.87</div>
<div style="left:704px;top:600px;width:54px;height:25px;line-height:25px;text-align:center;padding-top:1px;box-sizing:border-box;background:#f0f7fb;">2.03</div>
<div style="left:759px;top:600px;width:68px;height:25px;line-height:25px;text-align:center;padding-top:1px;box-sizing:border-box;background:#f0f7fb;">3.44</div>
<div style="left:828px;top:600px;width:69px;height:25px;line-height:25px;text-align:center;padding-top:1px;box-sizing:border-box;background:#f0f7fb;">3.72</div>
<div style="left:898px;top:600px;width:36px;height:25px;line-height:25px;text-align:center;padding-top:1px;box-sizing:border-box;background:#ffffff;color:#0000b8;">负</div>
<div style="left:935px;top:600px;width:36px;height:25px;line-height:25px;text-align:center;padding-top:1px;box-sizing:border-box;background:#ffffff;color:#0000b8;">输</div>
<div style="left:972px;top:600px;width:56px;height:25px;line-height:25px;text-align:center;padding-top:1px;box-sizing:border-box;background:#ffffff;color:#d80000;">大</div>
<div style="left:2px;top:626px;width:80px;height:25px;line-height:25px;text-align:center;padding-top:1px;box-sizing:border-box;background:#990099;color:#fff;">德甲</div>
<div style="left:83px;top:626px;width:73px;height:25px;line-height:25px;text-align:center;padding-top:1px;box-sizing:border-box;background:#f0f0f0;">25-02-16</div>
<div style="left:157px;top:626px;width:102px;height:25px;line-height:25px;text-align:center;padding-top:1px;box-sizing:border-box;background:#f0f0f0;"><span style="color:#0a6e0a">云达不莱梅</span></div>
<div style="left:260px;top:626px;width:87px;height:25px;line-height:25px;text-align:center;padding-top:1px;box-sizing:border-box;background:#f0f0f0;"><span style="color:#d80000">1-3</span>(1-2)</div>
<div style="left:348px;top:626px;width:37px;height:25px;line-height:25px;text-align:center;padding-top:1px;box-sizing:border-box;background:#f0f0f0;">6-4</div>
<div style="left:386px;top:626px;width:138px;height:25px;line-height:25px;text-align:center;padding-top:1px;box-sizing:border-box;background:#f0f0f0;">霍芬海姆</div>
<div style="left:525px;top:626px;width:42px;height:25px;line-height:25px;text-align:center;padding-top:1px;box-sizing:border-box;background:#fdf9f5;">0.88</div>
<div style="left:568px;top:626px;width:91px;height:25px;line-height:25px;text-align:center;padding-top:1px;box-sizing:border-box;background:#fdf9f5;">半球</div>
<div style="left:660px;top:626px;width:43px;height:25px;line-height:25px;text-align:center;padding-top:1px;box-sizing:border-box;background:#fdf9f5;">1.01</div>
<div style="left:704px;top:626px;width:54px;height:25px;line-height:25px;text-align:center;padding-top:1px;box-sizing:border-box;background:#f0f7fb;">1.87</div>
<div style="left:759px;top:626px;width:68px;height:25px;line-height:25px;text-align:center;padding-top:1px;box-sizing:border-box;background:#f0f7fb;">3.86</div>
<div style="left:828px;top:626px;width:69px;height:25px;line-height:25px;text-align:center;padding-top:1px;box-sizing:border-box;background:#f0f7fb;">3.83</div>
<div style="left:898px;top:626px;width:36px;height:25px;line-height:25px;text-align:center;padding-top:1px;box-sizing:border-box;background:#f0f0f0;color:#0000b8;">负</div>
<div style="left:935px;top:626px;width:36px;height:25px;line-height:25px;text-align:center;padding-top:1px;box-sizing:border-box;background:#f0f0f0;color:#0000b8;">输</div>
<div style="left:972px;top:626px;width:56px;height:25px;line-height:25px;text-align:center;padding-top:1px;box-sizing:border-box;background:#f0f0f0;color:#d80000;">大</div>
<div style="left:2px;top:652px;width:80px;height:25px;line-height:25px;text-align:center;padding-top:1px;box-sizing:border-box;background:#990099;color:#fff;">德甲</div>
<div style="left:83px;top:652px;width:73px;height:25px;line-height:25px;text-align:center;padding-top:1px;box-sizing:border-box;background:#ffffff;">25-02-08</div>
<div style="left:157px;top:652px;width:102px;height:25px;line-height:25px;text-align:center;padding-top:1px;box-sizing:border-box;background:#ffffff;">拜仁慕尼黑</div>
<div style="left:260px;top:652px;width:87px;height:25px;line-height:25px;text-align:center;padding-top:1px;box-sizing:border-box;background:#ffffff;"><span style="color:#d80000">3-0</span>(0-0)</div>
<div style="left:348px;top:652px;width:37px;height:25px;line-height:25px;text-align:center;padding-top:1px;box-sizing:border-box;background:#ffffff;">5-2</div>
<div style="left:386px;top:652px;width:138px;height:25px;line-height:25px;text-align:center;padding-top:1px;box-sizing:border-box;background:#ffffff;"><span style="color:#0a6e0a">云达不莱梅</span></div>
<div style="left:525px;top:652px;width:42px;height:25px;line-height:25px;text-align:center;padding-top:1px;box-sizing:border-box;background:#fdf9f5;">1.01</div>
<div style="left:568px;top:652px;width:91px;height:25px;line-height:25px;text-align:center;padding-top:1px;box-sizing:border-box;background:#fdf9f5;">两球半/三</div>
<div style="left:660px;top:652px;width:43px;height:25px;line-height:25px;text-align:center;padding-top:1px;box-sizing:border-box;background:#fdf9f5;">0.88</div>
<div style="left:704px;top:652px;width:54px;height:25px;line-height:25px;text-align:center;padding-top:1px;box-sizing:border-box;background:#f0f7fb;">1.10</div>
<div style="left:759px;top:652px;width:68px;height:25px;line-height:25px;text-align:center;padding-top:1px;box-sizing:border-box;background:#f0f7fb;">10.97</div>
<div style="left:828px;top:652px;width:69px;height:25px;line-height:25px;text-align:center;padding-top:1px;box-sizing:border-box;background:#f0f7fb;">19.46</div>
<div style="left:898px;top:652px;width:36px;height:25px;line-height:25px;text-align:center;padding-top:1px;box-sizing:border-box;background:#ffffff;color:#0000b8;">负</div>
<div style="left:935px;top:652px;width:36px;height:25px;line-height:25px;text-align:center;padding-top:1px;box-sizing:border-box;background:#ffffff;color:#0000b8;">输</div>
<div style="left:972px;top:652px;width:56px;height:25px;line-height:25px;text-align:center;padding-top:1px;box-sizing:border-box;background:#ffffff;color:#0000b8;">小</div>
<div style="left:2px;top:678px;width:80px;height:25px;line-height:25px;text-align:center;padding-top:1px;box-sizing:border-box;background:#990099;color:#fff;">德甲</div>
<div style="left:83px;top:678px;width:73px;height:25px;line-height:25px;text-align:center;padding-top:1px;box-sizing:border-box;background:#f0f0f0;">25-02-01</div>
<div style="left:157px;top:678px;width:102px;height:25px;line-height:25px;text-align:center;padding-top:1px;box-sizing:border-box;background:#f0f0f0;"><span class="bd">2</span><span style="color:#0a6e0a">云达不莱梅</span></div>
<div style="left:260px;top:678px;width:87px;height:25px;line-height:25px;text-align:center;padding-top:1px;box-sizing:border-box;background:#f0f0f0;"><span style="color:#d80000">1-0</span>(1-0)</div>
<div style="left:348px;top:678px;width:37px;height:25px;line-height:25px;text-align:center;padding-top:1px;box-sizing:border-box;background:#f0f0f0;">3-8</div>
<div style="left:386px;top:678px;width:138px;height:25px;line-height:25px;text-align:center;padding-top:1px;box-sizing:border-box;background:#f0f0f0;">美因茨</div>
<div style="left:525px;top:678px;width:42px;height:25px;line-height:25px;text-align:center;padding-top:1px;box-sizing:border-box;background:#fdf9f5;">1.04</div>
<div style="left:568px;top:678px;width:91px;height:25px;line-height:25px;text-align:center;padding-top:1px;box-sizing:border-box;background:#fdf9f5;">平/半</div>
<div style="left:660px;top:678px;width:43px;height:25px;line-height:25px;text-align:center;padding-top:1px;box-sizing:border-box;background:#fdf9f5;">0.85</div>
<div style="left:704px;top:678px;width:54px;height:25px;line-height:25px;text-align:center;padding-top:1px;box-sizing:border-box;background:#f0f7fb;">2.34</div>
<div style="left:759px;top:678px;width:68px;height:25px;line-height:25px;text-align:center;padding-top:1px;box-sizing:border-box;background:#f0f7fb;">3.37</div>
<div style="left:828px;top:678px;width:69px;height:25px;line-height:25px;text-align:center;padding-top:1px;box-sizing:border-box;background:#f0f7fb;">3.04</div>
<div style="left:898px;top:678px;width:36px;height:25px;line-height:25px;text-align:center;padding-top:1px;box-sizing:border-box;background:#f0f0f0;color:#d80000;">胜</div>
<div style="left:935px;top:678px;width:36px;height:25px;line-height:25px;text-align:center;padding-top:1px;box-sizing:border-box;background:#f0f0f0;color:#d80000;">赢</div>
<div style="left:972px;top:678px;width:56px;height:25px;line-height:25px;text-align:center;padding-top:1px;box-sizing:border-box;background:#f0f0f0;color:#0000b8;">小</div>
<div style="left:2px;top:704px;width:1026px;height:25px;line-height:25px;text-align:center;background:#fff;padding-top:1px;box-sizing:border-box;letter-spacing:0.19px;">近<span style="color:#d80000">10</span>场,胜4平0负6, 胜率:<span style="color:#d80000">40%</span> 让胜率:<span style="color:#d80000">40%</span> 大率:<span style="color:#d80000">60%</span> 单率:<span style="color:#d80000">60%</span></div>
<div style="left:1px;top:404px;width:1099px;height:1px;background:#bcbcbc"></div>
<div style="left:524px;top:424px;width:576px;height:1px;background:#bcbcbc"></div>
<div style="left:1px;top:443px;width:1099px;height:1px;background:#bcbcbc"></div>
<div style="left:1px;top:469px;width:1099px;height:1px;background:#bcbcbc"></div>
<div style="left:1px;top:495px;width:1099px;height:1px;background:#bcbcbc"></div>
<div style="left:1px;top:521px;width:1099px;height:1px;background:#bcbcbc"></div>
<div style="left:1px;top:547px;width:1099px;height:1px;background:#bcbcbc"></div>
<div style="left:1px;top:573px;width:1099px;height:1px;background:#bcbcbc"></div>
<div style="left:1px;top:599px;width:1099px;height:1px;background:#bcbcbc"></div>
<div style="left:1px;top:625px;width:1099px;height:1px;background:#bcbcbc"></div>
<div style="left:1px;top:651px;width:1099px;height:1px;background:#bcbcbc"></div>
<div style="left:1px;top:677px;width:1099px;height:1px;background:#bcbcbc"></div>
<div style="left:1px;top:703px;width:1099px;height:1px;background:#bcbcbc"></div>
<div style="left:1px;top:729px;width:1099px;height:1px;background:#bcbcbc"></div>
<div style="left:1px;top:404px;width:1px;height:299px;background:#bcbcbc"></div>
<div style="left:82px;top:404px;width:1px;height:299px;background:#bcbcbc"></div>
<div style="left:156px;top:404px;width:1px;height:299px;background:#bcbcbc"></div>
<div style="left:259px;top:404px;width:1px;height:299px;background:#bcbcbc"></div>
<div style="left:347px;top:404px;width:1px;height:299px;background:#bcbcbc"></div>
<div style="left:385px;top:404px;width:1px;height:299px;background:#bcbcbc"></div>
<div style="left:524px;top:404px;width:1px;height:299px;background:#bcbcbc"></div>
<div style="left:567px;top:424px;width:1px;height:279px;background:#bcbcbc"></div>
<div style="left:659px;top:424px;width:1px;height:279px;background:#bcbcbc"></div>
<div style="left:703px;top:404px;width:1px;height:299px;background:#bcbcbc"></div>
<div style="left:758px;top:424px;width:1px;height:279px;background:#bcbcbc"></div>
<div style="left:827px;top:424px;width:1px;height:279px;background:#bcbcbc"></div>
<div style="left:897px;top:404px;width:1px;height:299px;background:#bcbcbc"></div>
<div style="left:934px;top:424px;width:1px;height:279px;background:#bcbcbc"></div>
<div style="left:971px;top:424px;width:1px;height:279px;background:#bcbcbc"></div>
<div style="left:1px;top:703px;width:1px;height:26px;background:#bcbcbc"></div>
<div style="left:1px;top:443px;width:82px;height:1px;background:#ffffff"></div>
<div style="left:1px;top:469px;width:82px;height:1px;background:#ffffff"></div>
<div style="left:1px;top:495px;width:82px;height:1px;background:#ffffff"></div>
<div style="left:1px;top:521px;width:82px;height:1px;background:#ffffff"></div>
<div style="left:1px;top:547px;width:82px;height:1px;background:#ffffff"></div>
<div style="left:1px;top:573px;width:82px;height:1px;background:#ffffff"></div>
<div style="left:1px;top:599px;width:82px;height:1px;background:#ffffff"></div>
<div style="left:1px;top:625px;width:82px;height:1px;background:#ffffff"></div>
<div style="left:1px;top:651px;width:82px;height:1px;background:#ffffff"></div>
<div style="left:1px;top:677px;width:82px;height:1px;background:#ffffff"></div>
<div style="left:1px;top:703px;width:82px;height:1px;background:#ffffff"></div>
<div style="left:1px;top:443px;width:1px;height:261px;background:#ffffff"></div>
<div style="left:82px;top:443px;width:1px;height:261px;background:#ffffff"></div>
<div class="tx" style="left:422px;top:387px;">近</div><div class="sel" style="left:438px;top:385px;width:38px;height:17px;line-height:15px"><span style="font-family:'Liberation Mono',monospace;font-size:12px;left:6px;top:2px;">10</span><svg class="chev" width="10" height="7" viewBox="0 0 10 7" style="top:4px"><path d="M1 1 L5 5 L9 1" fill="none" stroke="#000" stroke-width="2.2"/></svg></div><div class="tx" style="left:480px;top:387px;">场</div><div class="cb" style="left:496px;top:385px"></div><div class="tx" style="left:513px;top:387px;">同客</div><div class="cb on" style="left:540px;top:385px"><svg width="13" height="13" viewBox="0 0 13 13"><path d="M3 6.6 L5.4 9 L10.2 3.6" fill="none" stroke="#fff" stroke-width="2"/></svg></div><div class="tx" style="left:553px;top:387px;">德甲</div><div class="cb on" style="left:577px;top:385px"><svg width="13" height="13" viewBox="0 0 13 13"><path d="M3 6.6 L5.4 9 L10.2 3.6" fill="none" stroke="#fff" stroke-width="2"/></svg></div><div class="tx" style="left:590px;top:387px;">德国杯</div><div class="cb on" style="left:626px;top:385px"><svg width="13" height="13" viewBox="0 0 13 13"><path d="M3 6.6 L5.4 9 L10.2 3.6" fill="none" stroke="#fff" stroke-width="2"/></svg></div><div class="tx" style="left:639px;top:387px;">球会友谊</div><div class="sel" style="left:554px;top:405px;width:61px;height:19px;line-height:17px"><span style="">Crow*</span><svg class="chev" width="10" height="7" viewBox="0 0 10 7" style="top:5px"><path d="M1 1 L5 5 L9 1" fill="none" stroke="#000" stroke-width="2.2"/></svg></div><div class="sel" style="left:622px;top:405px;width:51px;height:19px;line-height:17px"><span style="">終指</span><svg class="chev" width="10" height="7" viewBox="0 0 10 7" style="top:5px"><path d="M1 1 L5 5 L9 1" fill="none" stroke="#000" stroke-width="2.2"/></svg></div><div class="sel" style="left:736px;top:405px;width:70px;height:19px;line-height:17px"><span style="">平均值</span><svg class="chev" width="10" height="7" viewBox="0 0 10 7" style="top:5px"><path d="M1 1 L5 5 L9 1" fill="none" stroke="#000" stroke-width="2.2"/></svg></div><div class="sel" style="left:813px;top:405px;width:51px;height:19px;line-height:17px"><span style="">終指</span><svg class="chev" width="10" height="7" viewBox="0 0 10 7" style="top:5px"><path d="M1 1 L5 5 L9 1" fill="none" stroke="#000" stroke-width="2.2"/></svg></div><div class="sel" style="left:937px;top:405px;width:51px;height:19px;line-height:17px"><span style="">全场</span><svg class="chev" width="10" height="7" viewBox="0 0 10 7" style="top:5px"><path d="M1 1 L5 5 L9 1" fill="none" stroke="#000" stroke-width="2.2"/></svg></div>
</body></html>
